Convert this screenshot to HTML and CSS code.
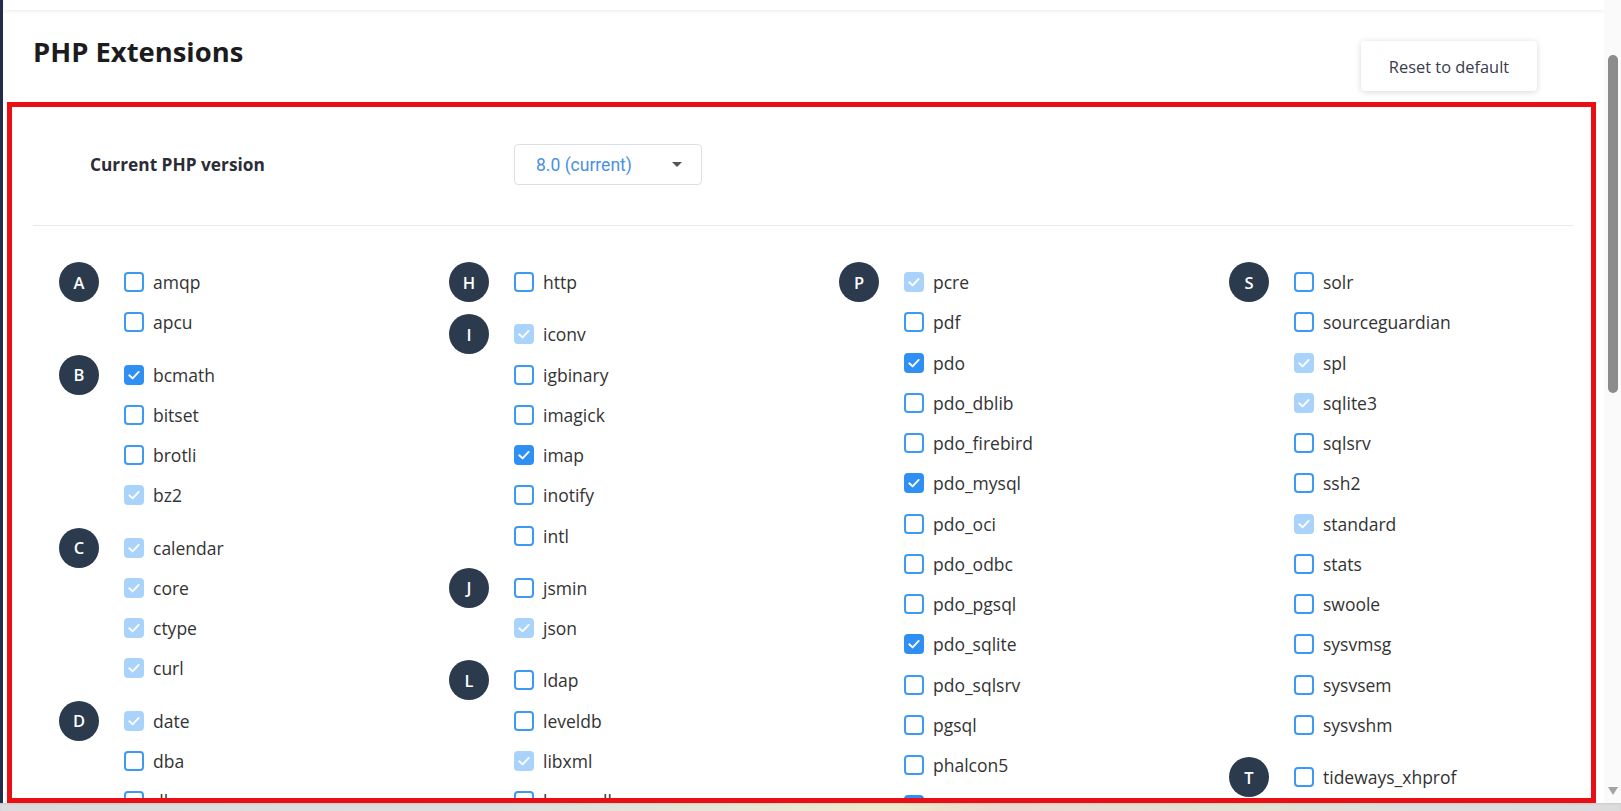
FILE: index.html
```html
<!DOCTYPE html>
<html lang="en">
<head>
<meta charset="utf-8">
<title>PHP Extensions</title>
<link rel="stylesheet" href="styles.css">
</head>
<body>
<div class="window">
  <div class="edge"></div>
  <main class="main">
    <div class="topbar"></div>
    <div class="page">
      <header class="page-head">
        <h1>PHP Extensions</h1>
        <button class="btn-reset" type="button">Reset to default</button>
      </header>
      <section class="panel">
        <div class="version-row">
          <span class="version-label">Current PHP version</span>
          <div class="select"><span class="select-value">8.0 (current)</span><span class="caret"></span></div>
        </div>
        <div class="sep"></div>
        <div class="ext-grid">
          <div class="col">
            <div class="group"><div class="letter">A</div><div class="items">
              <label class="item"><span class="cb"></span>amqp</label>
              <label class="item"><span class="cb"></span>apcu</label>
            </div></div>
            <div class="group"><div class="letter">B</div><div class="items">
              <label class="item"><span class="cb on"><svg viewBox="0 0 16 16"><path d="M3.3 8.3 L6.6 11.4 L12.7 4.9"/></svg></span>bcmath</label>
              <label class="item"><span class="cb"></span>bitset</label>
              <label class="item"><span class="cb"></span>brotli</label>
              <label class="item"><span class="cb dis"><svg viewBox="0 0 16 16"><path d="M3.3 8.3 L6.6 11.4 L12.7 4.9"/></svg></span>bz2</label>
            </div></div>
            <div class="group"><div class="letter">C</div><div class="items">
              <label class="item"><span class="cb dis"><svg viewBox="0 0 16 16"><path d="M3.3 8.3 L6.6 11.4 L12.7 4.9"/></svg></span>calendar</label>
              <label class="item"><span class="cb dis"><svg viewBox="0 0 16 16"><path d="M3.3 8.3 L6.6 11.4 L12.7 4.9"/></svg></span>core</label>
              <label class="item"><span class="cb dis"><svg viewBox="0 0 16 16"><path d="M3.3 8.3 L6.6 11.4 L12.7 4.9"/></svg></span>ctype</label>
              <label class="item"><span class="cb dis"><svg viewBox="0 0 16 16"><path d="M3.3 8.3 L6.6 11.4 L12.7 4.9"/></svg></span>curl</label>
            </div></div>
            <div class="group"><div class="letter">D</div><div class="items">
              <label class="item"><span class="cb dis"><svg viewBox="0 0 16 16"><path d="M3.3 8.3 L6.6 11.4 L12.7 4.9"/></svg></span>date</label>
              <label class="item"><span class="cb"></span>dba</label>
              <label class="item"><span class="cb"></span>dbase</label>
              <label class="item"><span class="cb dis"><svg viewBox="0 0 16 16"><path d="M3.3 8.3 L6.6 11.4 L12.7 4.9"/></svg></span>dom</label>
            </div></div>
          </div>
          <div class="col">
            <div class="group"><div class="letter">H</div><div class="items">
              <label class="item"><span class="cb"></span>http</label>
            </div></div>
            <div class="group"><div class="letter">I</div><div class="items">
              <label class="item"><span class="cb dis"><svg viewBox="0 0 16 16"><path d="M3.3 8.3 L6.6 11.4 L12.7 4.9"/></svg></span>iconv</label>
              <label class="item"><span class="cb"></span>igbinary</label>
              <label class="item"><span class="cb"></span>imagick</label>
              <label class="item"><span class="cb on"><svg viewBox="0 0 16 16"><path d="M3.3 8.3 L6.6 11.4 L12.7 4.9"/></svg></span>imap</label>
              <label class="item"><span class="cb"></span>inotify</label>
              <label class="item"><span class="cb"></span>intl</label>
            </div></div>
            <div class="group"><div class="letter">J</div><div class="items">
              <label class="item"><span class="cb"></span>jsmin</label>
              <label class="item"><span class="cb dis"><svg viewBox="0 0 16 16"><path d="M3.3 8.3 L6.6 11.4 L12.7 4.9"/></svg></span>json</label>
            </div></div>
            <div class="group"><div class="letter">L</div><div class="items">
              <label class="item"><span class="cb"></span>ldap</label>
              <label class="item"><span class="cb"></span>leveldb</label>
              <label class="item"><span class="cb dis"><svg viewBox="0 0 16 16"><path d="M3.3 8.3 L6.6 11.4 L12.7 4.9"/></svg></span>libxml</label>
              <label class="item"><span class="cb"></span>luasandbox</label>
            </div></div>
          </div>
          <div class="col">
            <div class="group"><div class="letter">P</div><div class="items">
              <label class="item"><span class="cb dis"><svg viewBox="0 0 16 16"><path d="M3.3 8.3 L6.6 11.4 L12.7 4.9"/></svg></span>pcre</label>
              <label class="item"><span class="cb"></span>pdf</label>
              <label class="item"><span class="cb on"><svg viewBox="0 0 16 16"><path d="M3.3 8.3 L6.6 11.4 L12.7 4.9"/></svg></span>pdo</label>
              <label class="item"><span class="cb"></span>pdo_dblib</label>
              <label class="item"><span class="cb"></span>pdo_firebird</label>
              <label class="item"><span class="cb on"><svg viewBox="0 0 16 16"><path d="M3.3 8.3 L6.6 11.4 L12.7 4.9"/></svg></span>pdo_mysql</label>
              <label class="item"><span class="cb"></span>pdo_oci</label>
              <label class="item"><span class="cb"></span>pdo_odbc</label>
              <label class="item"><span class="cb"></span>pdo_pgsql</label>
              <label class="item"><span class="cb on"><svg viewBox="0 0 16 16"><path d="M3.3 8.3 L6.6 11.4 L12.7 4.9"/></svg></span>pdo_sqlite</label>
              <label class="item"><span class="cb"></span>pdo_sqlsrv</label>
              <label class="item"><span class="cb"></span>pgsql</label>
              <label class="item"><span class="cb"></span>phalcon5</label>
              <label class="item"><span class="cb on"><svg viewBox="0 0 16 16"><path d="M3.3 8.3 L6.6 11.4 L12.7 4.9"/></svg></span>phar</label>
            </div></div>
          </div>
          <div class="col">
            <div class="group"><div class="letter">S</div><div class="items">
              <label class="item"><span class="cb"></span>solr</label>
              <label class="item"><span class="cb"></span>sourceguardian</label>
              <label class="item"><span class="cb dis"><svg viewBox="0 0 16 16"><path d="M3.3 8.3 L6.6 11.4 L12.7 4.9"/></svg></span>spl</label>
              <label class="item"><span class="cb dis"><svg viewBox="0 0 16 16"><path d="M3.3 8.3 L6.6 11.4 L12.7 4.9"/></svg></span>sqlite3</label>
              <label class="item"><span class="cb"></span>sqlsrv</label>
              <label class="item"><span class="cb"></span>ssh2</label>
              <label class="item"><span class="cb dis"><svg viewBox="0 0 16 16"><path d="M3.3 8.3 L6.6 11.4 L12.7 4.9"/></svg></span>standard</label>
              <label class="item"><span class="cb"></span>stats</label>
              <label class="item"><span class="cb"></span>swoole</label>
              <label class="item"><span class="cb"></span>sysvmsg</label>
              <label class="item"><span class="cb"></span>sysvsem</label>
              <label class="item"><span class="cb"></span>sysvshm</label>
            </div></div>
            <div class="group"><div class="letter">T</div><div class="items">
              <label class="item"><span class="cb"></span>tideways_xhprof</label>
              <label class="item"><span class="cb"></span>tidy</label>
            </div></div>
          </div>
        </div>
      </section>
    </div>
  </main>
  <div class="scrollbar">
    <div class="thumb"></div>
    <div class="arrow-down"></div>
  </div>
</div>
<div class="taskbar"></div>
</body>
</html>
```

FILE: styles.css
```css
* { box-sizing: border-box; }

html, body {
  margin: 0;
  padding: 0;
  background: #ffffff;
  overflow: hidden;
}

body {
  width: 1621px;
  height: 811px;
  display: flex;
  flex-direction: column;
  font-family: "Open Sans", "Noto Sans", sans-serif;
  color: #333333;
}

.window {
  display: flex;
  height: 803px;
  flex: none;
}

.edge {
  width: 3px;
  flex: none;
  background: #232c48;
}

.main {
  flex: 1;
  min-width: 0;
  display: flex;
  flex-direction: column;
  overflow: hidden;
  background: #ffffff;
}

.topbar {
  height: 10px;
  flex: none;
  margin-left: 1px;
  background: #ffffff;
  box-shadow: 0 1px 4px rgba(0, 0, 0, 0.09);
  position: relative;
  z-index: 1;
}

.page {
  flex: 1;
  min-height: 0;
  display: flex;
  flex-direction: column;
  padding: 0 8px 0 4px;
}

.page-head {
  height: 92px;
  flex: none;
  display: flex;
  justify-content: space-between;
  align-items: flex-start;
  padding: 0 59px 0 26px;
}

.page-head h1 {
  margin: 23px 0 0;
  font-size: 27.4px;
  line-height: 38px;
  font-weight: 700;
  color: #1c1c1e;
}

.btn-reset {
  margin-top: 31px;
  width: 176px;
  height: 50px;
  border: 0;
  border-radius: 4px;
  background: #ffffff;
  box-shadow: 0 1px 6px rgba(0, 0, 0, 0.16);
  font-family: "Open Sans", sans-serif;
  font-size: 16.4px;
  color: #3a3b4c;
  padding: 0;
}

.panel {
  flex: 1;
  min-height: 0;
  overflow: hidden;
  border: 5px solid #ea0f14;
  padding: 37px 18px 0 21px;
}

.version-row {
  display: flex;
  align-items: center;
  height: 41px;
  padding-left: 57px;
}

.version-label {
  width: 424px;
  flex: none;
  font-size: 17.3px;
  font-weight: 700;
  color: #2b2c36;
}

.select {
  width: 188px;
  height: 41px;
  border: 1px solid #dcdfe6;
  border-radius: 4px;
  display: flex;
  align-items: center;
  justify-content: space-between;
  padding: 0 19px 0 21px;
  font-family: Roboto, "Liberation Sans", sans-serif;
  font-size: 17.5px;
  color: #4a90e2;
}

.caret {
  width: 0;
  height: 0;
  border-left: 5px solid transparent;
  border-right: 5px solid transparent;
  border-top: 5px solid #555555;
}

.sep {
  height: 1px;
  background: #e9e9ec;
  margin: 40px 0 36px;
}

.ext-grid {
  display: grid;
  grid-template-columns: repeat(4, 390px);
  align-items: start;
  padding-left: 26px;
}

.group {
  display: flex;
  margin-bottom: 12px;
}

.letter {
  width: 40px;
  height: 40px;
  flex: none;
  border-radius: 50%;
  background: #2b3a4d;
  color: #ffffff;
  display: flex;
  align-items: center;
  justify-content: center;
  font-size: 16.5px;
  font-weight: 600;
  margin-right: 25px;
}

.items {
  display: flex;
  flex-direction: column;
}

.item {
  height: 40.25px;
  display: flex;
  align-items: center;
  gap: 9px;
  font-size: 17.5px;
  color: #333333;
  white-space: nowrap;
}

.cb {
  width: 20px;
  height: 20px;
  flex: none;
  border: 2px solid #3d9af4;
  border-radius: 4px;
  display: flex;
  background: #ffffff;
}

.cb svg {
  width: 16px;
  height: 16px;
  fill: none;
  stroke: #ffffff;
  stroke-width: 1.9;
  stroke-linecap: round;
  stroke-linejoin: round;
}

.cb.on {
  background: #2f8ff3;
  border-color: #2f8ff3;
}

.cb.dis {
  background: #a9d3fa;
  border-color: #a9d3fa;
}

.scrollbar {
  width: 17px;
  flex: none;
  background: #fafafa;
  display: flex;
  flex-direction: column;
  align-items: flex-start;
  padding: 55px 0 8px 4px;
}

.thumb {
  width: 10px;
  height: 338px;
  border-radius: 5px;
  background: #8c8c8c;
}

.arrow-down {
  margin-top: auto;
  width: 0;
  height: 0;
  border-left: 5px solid transparent;
  border-right: 5px solid transparent;
  border-top: 8px solid #a3a3a3;
}

.taskbar {
  height: 8px;
  flex: none;
  background: linear-gradient(90deg, #dcdcdc 0%, #dedede 30%, #e9e6d6 45%, #f0eacb 55%, #eed7cf 62%, #e6e2d2 75%, #dedede 88%, #dcdcdc 100%);
  box-shadow: inset 0 1px 2px rgba(0, 0, 0, 0.08);
}
```
